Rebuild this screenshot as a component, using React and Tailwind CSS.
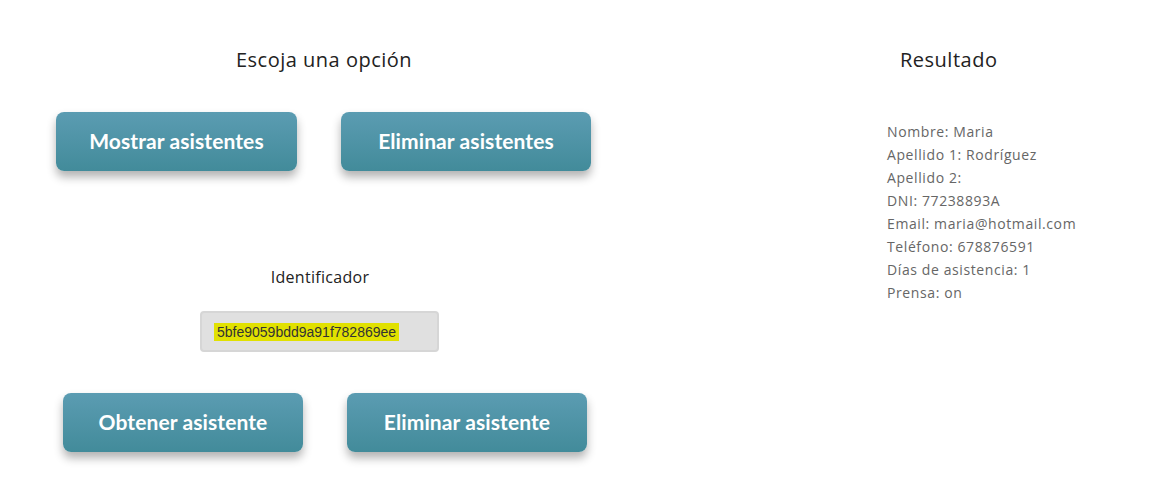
const btn =
  "h-[59px] rounded-[8px] bg-gradient-to-b from-[#5b9cb2] to-[#428b9a] text-white text-[21px] font-bold shadow-[0_6px_10px_rgba(0,0,0,0.3)] font-['Lato',sans-serif] tracking-[0.1px] pb-[2px]";

export default function App() {
  const datos = [
    "Nombre: Maria",
    "Apellido 1: Rodríguez",
    "Apellido 2:",
    "DNI: 77238893A",
    "Email: maria@hotmail.com",
    "Teléfono: 678876591",
    "Días de asistencia: 1",
    "Prensa: on",
  ];

  return (
    <div className="w-[1150px] h-[479px] bg-white flex font-['Open_Sans',sans-serif] overflow-hidden">
      {/* Opciones */}
      <div className="w-[650px] flex flex-col pt-[46px]">
        <h2 className="text-[20px] text-[#222] leading-[28px] text-center tracking-[0.5px] pr-[2px]">Escoja una opción</h2>
        <div className="flex gap-[44px] mt-[38px] ml-[56px]">
          <button className={`${btn} w-[241px]`}>Mostrar asistentes</button>
          <button className={`${btn} w-[250px]`}>Eliminar asistentes</button>
        </div>

        <p className="mt-[95px] text-[16px] text-[#222] leading-[22px] text-center pr-[10px] tracking-[0.3px]">Identificador</p>
        <div className="mt-[23px] ml-[200px] w-[239px] h-[41px] rounded-[4px] bg-[#e0e0e0] border-2 border-[#d6d6d6] flex items-center pl-[12px]">
          <span className="bg-[#e1e100] px-[3px] text-[14px] text-[#333] font-['Liberation_Sans',sans-serif] leading-[18px]">
            5bfe9059bdd9a91f782869ee
          </span>
        </div>

        <div className="flex gap-[44px] mt-[41px] ml-[63px]">
          <button className={`${btn} w-[240px]`}>Obtener asistente</button>
          <button className={`${btn} w-[240px]`}>Eliminar asistente</button>
        </div>
      </div>

      {/* Resultado */}
      <div className="flex-1 flex flex-col pt-[46px]">
        <h2 className="text-[20px] text-[#222] leading-[28px] ml-[250px] tracking-[0.5px]">Resultado</h2>
        <ul className="mt-[46px] ml-[237px] text-[14px] text-[#666] leading-[23px] tracking-[0.6px]">
          {datos.map((d) => (
            <li key={d}>{d}</li>
          ))}
        </ul>
      </div>
    </div>
  );
}
